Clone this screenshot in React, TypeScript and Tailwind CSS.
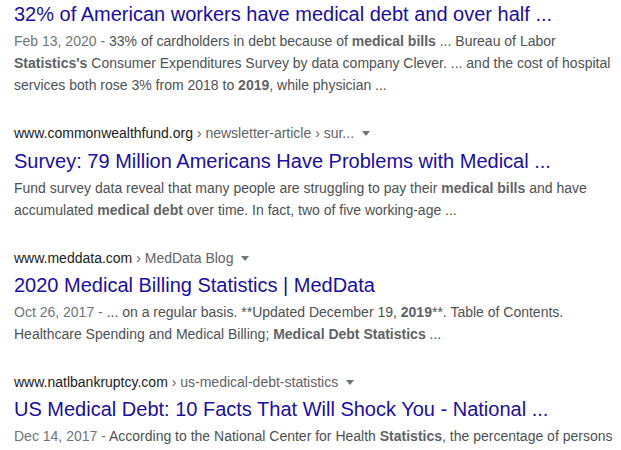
import React from 'react';

type Part = string | { b: string };

interface Result {
  domain?: string;
  crumbs?: string;
  title: string;
  date?: string;
  snippet: Part[];
}

const results: Result[] = [
  {
    title: "32% of American workers have medical debt and over half ...",
    date: "Feb 13, 2020",
    snippet: [
      "33% of cardholders in debt because of ",
      { b: "medical bills" },
      " ... Bureau of Labor ",
      { b: "Statistics's" },
      " Consumer Expenditures Survey by data company Clever. ... and the cost of hospital services both rose 3% from 2018 to ",
      { b: "2019" },
      ", while physician ..."
    ]
  },
  {
    domain: "www.commonwealthfund.org",
    crumbs: "› newsletter-article › sur...",
    title: "Survey: 79 Million Americans Have Problems with Medical ...",
    snippet: [
      "Fund survey data reveal that many people are struggling to pay their ",
      { b: "medical bills" },
      " and have accumulated ",
      { b: "medical debt" },
      " over time. In fact, two of five working-age ..."
    ]
  },
  {
    domain: "www.meddata.com",
    crumbs: "› MedData Blog",
    title: "2020 Medical Billing Statistics | MedData",
    date: "Oct 26, 2017",
    snippet: [
      "... on a regular basis. **Updated December 19, ",
      { b: "2019" },
      "**. Table of Contents. Healthcare Spending and Medical Billing; ",
      { b: "Medical Debt Statistics" },
      " ..."
    ]
  },
  {
    domain: "www.natlbankruptcy.com",
    crumbs: "› us-medical-debt-statistics",
    title: "US Medical Debt: 10 Facts That Will Shock You - National ...",
    date: "Dec 14, 2017",
    snippet: [
      "According to the National Center for Health ",
      { b: "Statistics" },
      ", the percentage of persons with medical debt ..."
    ]
  }
];

const Caret = () => (
  <svg width="10" height="10" viewBox="0 0 10 10" className="ml-[7px] inline-block align-[0px]">
    <path d="M1 3 L9 3 L5 8 Z" fill="#70757a" />
  </svg>
);

export default function App() {
  return (
    <div
      className="w-[621px] h-[450px] overflow-hidden bg-white pl-[14px] pt-[1px]"
      style={{ fontFamily: '"Liberation Sans", Arial, sans-serif' }}
    >
      <div className="w-[600px] flex flex-col gap-[27px]">
        {results.map((r, i) => (
          <div key={i} className="flex flex-col">
            {r.domain && (
              <div className="pt-[1px] text-[14px] leading-[1.3] whitespace-nowrap">
                <span className="text-[#202124]">{r.domain}</span>{" "}
                <span className="text-[#5f6368]">{r.crumbs}</span>
                <Caret />
              </div>
            )}
            <h3
              className={`text-[20px] leading-[26px] text-[#1a0dab] whitespace-nowrap ${r.domain ? "mt-[5px]" : ""}`}
            >
              {r.title}
            </h3>
            <div className="mt-[3px] text-[14px] leading-[1.58] text-[#4d5156]">
              {r.date && <span className="text-[#70757a]">{r.date} - </span>}
              {r.snippet.map((p, j) =>
                typeof p === "string" ? (
                  <span key={j}>{p}</span>
                ) : (
                  <b key={j} className="font-bold text-[#5f6368]">{p.b}</b>
                )
              )}
            </div>
          </div>
        ))}
      </div>
    </div>
  );
}
